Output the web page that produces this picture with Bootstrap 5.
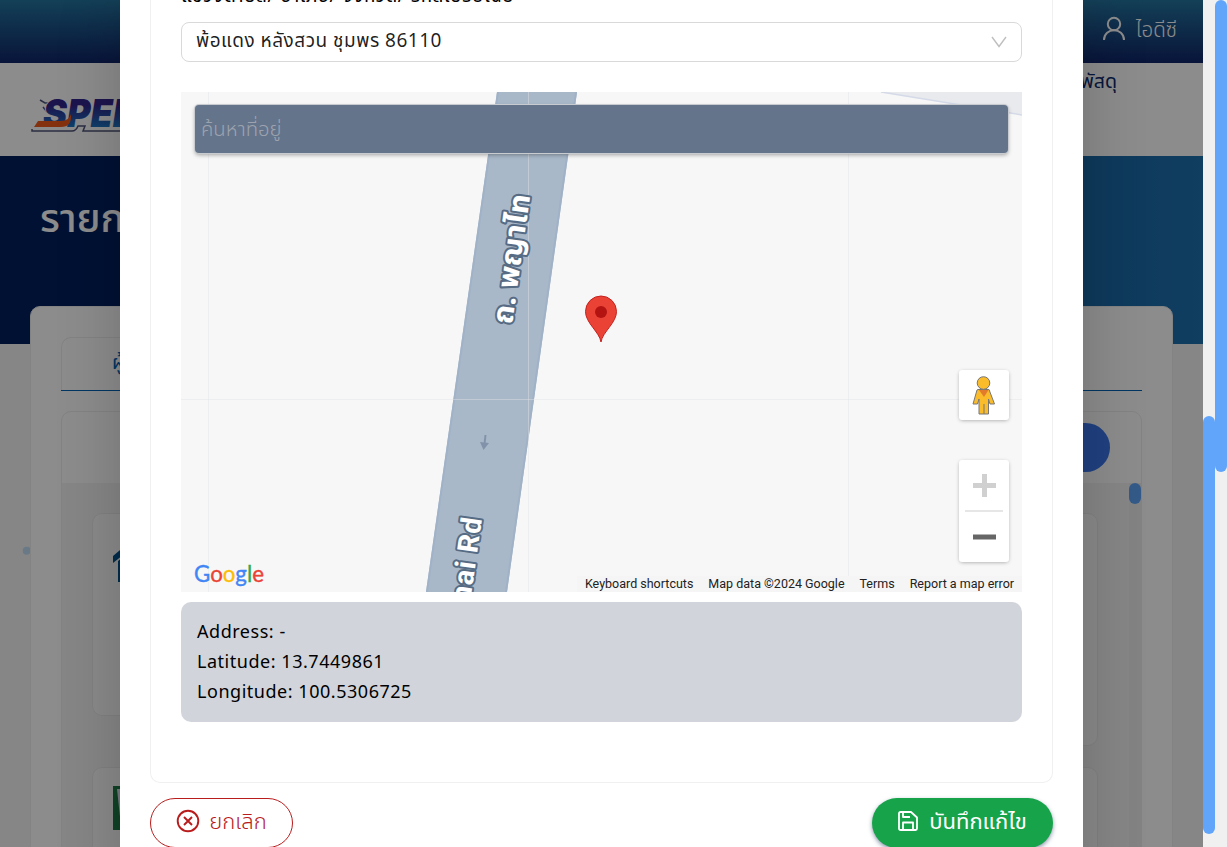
<!DOCTYPE html>
<html lang="th">
<head>
<meta charset="utf-8">
<meta name="viewport" content="width=device-width, initial-scale=1">
<title>แก้ไขที่อยู่</title>
<link href="https://cdn.jsdelivr.net/npm/bootstrap@5.3.0/dist/css/bootstrap.min.css" rel="stylesheet">
<style>
  body { font-family: "Noto Sans", "Noto Sans Thai", sans-serif; font-size: 18px; line-height: 30px; background: #f0f0f0; overflow: hidden; color: #000; }
  .viewport { width: 1227px; height: 847px; }
  .page-area { width: 1203px; background: #f4f4f4; }
  .topbar { height: 63px; background: linear-gradient(#24759f, #10256a); color: #fff; padding: 0 26px 5px 0; gap: 10px; }
  .topbar span { font-size: 20.5px; font-weight: 300; }
  .menu-row { height: 93px; background: #fff; padding-left: 30px; padding-right: 86px; }
  .menu-row a { color: #0a2a6e; text-decoration: none; margin-top: 3px; font-size: 19.5px; }
  .hero { height: 188px; background: linear-gradient(90deg, #021f5d 12%, #1d71b0); color: #fff; padding: 30px 40px; }
  .hero h1 { font-size: 40px; line-height: 62px; font-weight: 500; }
  .main-card { margin: -38px 30px 0; height: 620px; background: #fff; border: 1px solid #eee; border-radius: 10px; padding: 30px; }
  .tab-strip { height: 54px; border-bottom: 1px solid #0063b5; margin-bottom: 20px; }
  .tab-item { width: 200px; border: 1px solid #eee; border-bottom: 0; border-radius: 10px 10px 0 0; padding: 9px 0 0 50px; color: #0063b5; font-size: 20px; }
  .list-box { height: 520px; border: 1px solid #eee; border-radius: 10px 10px 0 0; }
  .list-head { height: 71px; padding-right: 31px; }
  .pill-blue { width: 120px; height: 49px; border-radius: 25px; background: #3b76ea; color: #fff; }
  .list-body { background: #f5f5f5; padding-left: 30px; }
  .cards-gap { gap: 26px; }
  .cards-col { padding-top: 30px; gap: 21px; }
  .item-card { background: #fbfbfb; border: 1px solid #ececec; border-radius: 10px; width: 490px; height: 203px; padding: 18px 20px; flex-shrink: 0; }
  .inner-track { width: 12px; background: #efefef; }
  .inner-thumb { height: 21px; border-radius: 6px; background: #60a5fa; }
  .track { width: 12px; background: #f0f0f0; }
  .thumb { border-radius: 6px; background: #60a5fa; }
  .shade { width: 1203px; background: rgba(0,0,0,.45); overflow: hidden; }
  .dialog-panel { width: 963px; height: 900px; margin-left: 120px; background: #fff; padding: 0 30px; box-shadow: 0 0 60px rgba(0,0,0,.2); }
  .form-box { height: 783px; border: 1px solid #f0f0f0; border-top: 0; border-radius: 0 0 10px 10px; padding: 0 30px; }
  .field-label { height: 22px; }
  .field-label span { margin-top: -20px; white-space: nowrap; font-size: 19px; letter-spacing: .55px; }
  .pick { height: 40px; border: 1px solid #d9d9d9; border-radius: 8px; padding: 0 14px; color: rgba(0,0,0,.88); }
  .pick span { font-size: 19px; letter-spacing: .5px; margin-top: -5px; }
  .map-box { height: 500px; margin-top: 30px; background: #f7f7f7; overflow: hidden; }
  .search-box { left: 14px; top: 13px; width: 813px; height: 48px; background: #64748b; border-radius: 4px; color: #9ca3af; padding: 8px 6px; font-size: 20.3px; font-weight: 300; box-shadow: 0 0 0 1px #c8ccd0, 0 2px 4px rgba(0,0,0,.35); }
  .map-ctl { right: 13px; width: 50px; background: #fff; border-radius: 3px; box-shadow: 0 1px 4px -1px rgba(0,0,0,.4); }
  .map-notes { right: 0; bottom: 0; height: 16px; font: 12.5px/16px Roboto, sans-serif; background: #f5f5f5; gap: 15px; padding: 0 8px; white-space: nowrap; color: #222; }
  .geo { height: 120px; margin-top: 10px; background: #d1d5db; border-radius: 10px; padding: 14px 16px; letter-spacing: .53px; }
  .btn-round { height: 50px; border-radius: 25px; font-size: 22px; line-height: 30px; display: flex; align-items: center; justify-content: center; gap: 9px; padding: 0 0 4px; }
  .btn-round span { margin-top: -2px; }
  .btn-cancel { width: 143px; border: 1px solid #b91c1c; color: #b91c1c; background: #fff; font-weight: 300; }
  .btn-save { width: 181px; background: #16a34a; color: #fff; gap: 11px; box-shadow: 0 2px 4px rgba(30,50,90,.5); }
</style>
</head>
<body>
<div class="viewport position-relative d-flex overflow-hidden">
  <div class="page-area">
    <header class="topbar d-flex justify-content-end align-items-center">
      <svg width="24" height="26" viewBox="0 0 24 26" fill="none" stroke="#fff" stroke-width="2"><circle cx="12" cy="8" r="6.200"/><path d="M2 24C2 11 22 11 22 24"/></svg>
      <span>ไอดีซี</span>
    </header>
    <nav class="menu-row d-flex justify-content-between">
      <svg class="mt-4" width="170" height="60" viewBox="0 0 170 60">
        <defs><linearGradient id="lg" x1="0" y1="0" x2="0" y2="1"><stop offset="0.35" stop-color="#33268c"/><stop offset=".85" stop-color="#1b7cc8"/></linearGradient></defs>
        <path d="M10 13l5 3h5M13 20l4 5M2 42v2h40q4 0 6-5h7l-2 5h60" fill="none" stroke="#50557a" stroke-width="1.500"/>
        <text x="13" y="40" font-family="Inter" font-weight="900" font-style="italic" font-size="39" textLength="118" lengthAdjust="spacingAndGlyphs" fill="url(#lg)" stroke="#fff" stroke-width="2" paint-order="stroke">SPEED</text>
        <path d="M8 34H31Q39 34 41 27Q42 40 31 40H4Z" fill="#f05a1c"/>
      </svg>
      <a href="#">พัสดุ</a>
    </nav>
    <section class="hero"><h1>รายการ</h1></section>
    <main class="main-card position-relative">
      <div class="tab-strip d-flex"><div class="tab-item">ผู้ส่ง</div></div>
      <div class="list-box d-flex flex-column overflow-hidden">
        <div class="list-head d-flex align-items-center justify-content-end flex-shrink-0"><div class="pill-blue"></div></div>
        <div class="list-body d-flex flex-fill justify-content-between">
          <div class="d-flex cards-gap">
            <div class="cards-col d-flex flex-column">
              <div class="item-card" style="margin-bottom:30px"><svg width="40" height="50" viewBox="0 0 40 50"><path d="M0 19L20 2L40 19V26L20 10L0 26ZM5 24L20 12L35 24V45H5Z" transform="translate(0 5)" fill="#00528c"/></svg></div>
              <div class="item-card"><svg width="44" height="44" viewBox="0 0 44 44"><path fill="#1c7a46" d="M0 0H44V44H0Z"/><path d="M4 3L8 40H20L18 3Z" fill="#dde"/></svg></div>
            </div>
            <div class="cards-col d-flex flex-column">
              <div class="item-card" style="height:233px"></div>
              <div class="item-card"></div>
            </div>
          </div>
          <div class="inner-track"><div class="inner-thumb"></div></div>
        </div>
      </div>
    </main>
  </div>
  <div class="track"><div class="thumb" style="height:418px;margin-top:416px"></div></div>
  <div class="track"><div class="thumb" style="height:472px"></div></div>

  <svg class="position-absolute" style="left:22px;top:546px" width="8" height="10"><circle cx="4.700" cy="4.700" r="4" fill="#c0dcf4"/></svg>

  <div class="shade position-absolute top-0 start-0 h-100">
    <div class="dialog-panel">
      <div class="form-box">
        <div class="field-label d-flex"><span>แขวงตำบล/ อำเภอ/ จังหวัด/ รหัสไปรษณีย์</span></div>
        <div class="pick d-flex align-items-center justify-content-between">
          <span>พ้อแดง หลังสวน ชุมพร 86110</span>
          <svg width="16" height="14" viewBox="0 0 16 14" fill="none" stroke="#bfbfbf" stroke-width="1.400"><path d="M1 2L8 11.500L15 2"/></svg>
        </div>
        <div class="map-box position-relative">
          <svg class="d-block" width="841" height="500" viewBox="0 0 841 500">
            <path d="M700 0L841 23V0Z" fill="#e8eaed"/><path d="M700 0L841 23" stroke="#d5dae8" stroke-width="1.500"/>
            <path d="M316 0H396L326 500H245Z" fill="#a9b8c9"/>
            <path d="M317 0L246 500M395 0L325 500" stroke="#a0b2c7" stroke-width="2"/>
            <path d="M27.500 0V500M347.500 0V500M667.500 0V500M0 307.500H841" stroke="#dfe2e4" stroke-opacity=".45"/>
            <g font-weight="700" fill="#fff" stroke="#566b84" stroke-width="4" stroke-linejoin="round" paint-order="stroke">
              <text transform="translate(331 233) rotate(-82)" font-family="Noto Sans, Noto Sans Thai, sans-serif" font-size="29" textLength="131" lengthAdjust="spacingAndGlyphs">ถ. พญาไท</text>
              <text transform="translate(301 426) rotate(-82)" text-anchor="end" font-family="Roboto" font-size="28.500" letter-spacing=".9">Phaya Thai Rd</text>
            </g>
            <path d="M304.500 343L303.500 352" stroke="#8293a9" stroke-width="2"/><path d="M299 350L308 351L302.500 358Z" fill="#8293a9"/>
            <path d="M420 250C418.500 240 404.500 231 404.500 219.500A15.500 15.500 0 0 1 435.500 219.500C435.500 231 421.500 240 420 250Z" fill="#ea4335" stroke="#c5221f"/><circle cx="420" cy="220" r="6" fill="#b31412"/>
            <text x="13" y="490" font-family="Lato" font-size="24" textLength="70" lengthAdjust="spacingAndGlyphs" stroke-width=".4"><tspan fill="#4285f4" stroke="#4285f4">G</tspan><tspan fill="#ea4335" stroke="#ea4335">o</tspan><tspan fill="#fbbc04" stroke="#fbbc04">o</tspan><tspan fill="#4285f4" stroke="#4285f4">g</tspan><tspan fill="#34a853" stroke="#34a853">l</tspan><tspan fill="#ea4335" stroke="#ea4335">e</tspan></text>
          </svg>
          <div class="search-box position-absolute">ค้นหาที่อยู่</div>
          <div class="map-ctl position-absolute" style="top:278px;height:50px">
            <svg class="d-block" width="50" height="50" viewBox="0 0 50 50" fill="#fbbc2c" stroke="#777" stroke-width="1"><path d="M19 19.500H30L35.500 34H31L29.500 29V44H20V29L18.500 34H14L18 20Z"/><path d="M25 34V44"/><path d="M20 20H29.500L25 27Z" fill="#e37b2c" stroke="none"/><circle cx="24.500" cy="13" r="6.300"/></svg>
          </div>
          <div class="map-ctl position-absolute" style="top:368px;height:102px">
            <svg class="d-block" width="50" height="102" viewBox="0 0 50 102"><path d="M14 25.500H37M25.500 14V37" stroke="#d0d0d0" stroke-width="5"/><path d="M6 51H44" stroke="#e6e6e6" stroke-width="2"/><path d="M14 77H37" stroke="#666" stroke-width="5"/></svg>
          </div>
          <div class="map-notes position-absolute d-flex"><span>Keyboard shortcuts</span><span>Map data ©2024 Google</span><span>Terms</span><span>Report a map error</span></div>
        </div>
        <div class="geo"><div>Address: -</div><div>Latitude: 13.7449861</div><div>Longitude: 100.5306725</div></div>
      </div>
      <div class="d-flex justify-content-between" style="margin-top:15px">
        <button class="btn btn-round btn-cancel" type="button"><svg width="24" height="24" viewBox="0 0 24 24" fill="none" stroke="currentColor" stroke-width="1.900"><circle cx="12" cy="12" r="10.300"/><path d="M8 8L16 16M16 8L8 16"/></svg><span>ยกเลิก</span></button>
        <button class="btn btn-round btn-save" type="button"><svg width="20" height="20" viewBox="1 1 20 20" fill="none" stroke="currentColor" stroke-width="1.800" stroke-linejoin="round"><path d="M3.500 2H14L20 7.500V18.500Q20 20 18.500 20H3.500Q2 20 2 18.500V3.500Q2 2 3.500 2ZM6 2V7H13M6 20V12.500H16V20"/></svg><span>บันทึกแก้ไข</span></button>
      </div>
    </div>
  </div>
</div>
<script src="https://cdn.jsdelivr.net/npm/bootstrap@5.3.0/dist/js/bootstrap.bundle.min.js"></script>
</body>
</html>
